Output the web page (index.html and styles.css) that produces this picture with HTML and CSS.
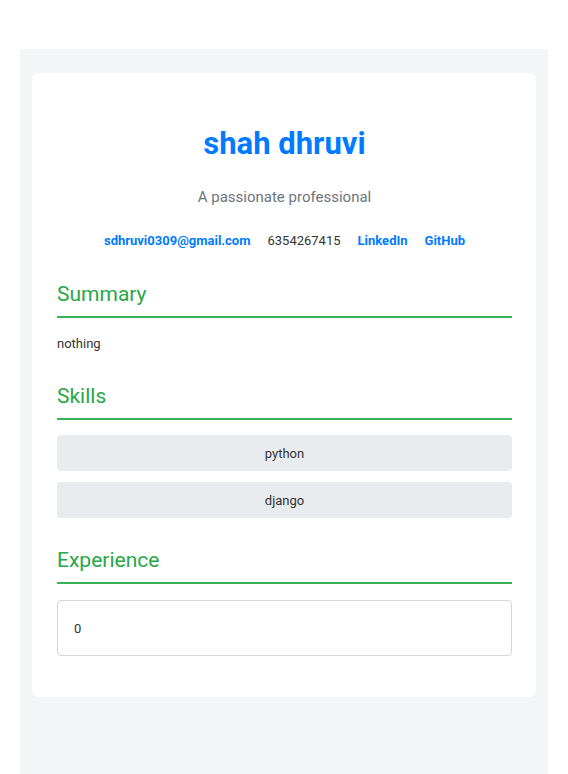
FILE: index.html
```html
<!DOCTYPE html>
<html>
<head>
<meta charset="utf-8">
<link rel="stylesheet" href="styles.css">
</head>
<body>
<div class="page">
  <div class="card">
    <header class="head">
      <h1 class="name">shah dhruvi</h1>
      <p class="tagline">A passionate professional</p>
      <div class="contact">
        <a class="link" href="#">sdhruvi0309@gmail.com</a>
        <span class="phone">6354267415</span>
        <a class="link" href="#">LinkedIn</a>
        <a class="link" href="#">GitHub</a>
      </div>
    </header>
    <section class="section">
      <h2 class="sec-title">Summary</h2>
      <p class="text">nothing</p>
    </section>
    <section class="section">
      <h2 class="sec-title">Skills</h2>
      <div class="skills">
        <div class="skill">python</div>
        <div class="skill">django</div>
      </div>
    </section>
    <section class="section">
      <h2 class="sec-title">Experience</h2>
      <div class="exp">0</div>
    </section>
  </div>
</div>
</body>
</html>
```
FILE: styles.css
```css
html, body {
  margin: 0;
  padding: 0;
  background: #fff;
}
body {
  font-family: Roboto, "Liberation Sans", sans-serif;
  color: #333;
  padding: 49px 20px 0;
}
.page {
  background: #f4f5f7;
  padding: 24px 12px 80px;
  min-height: 620px;
}
.card {
  background: #fff;
  border-radius: 6px;
  padding: 26px 24px 41px 25px;
}
.head {
  text-align: center;
  padding-bottom: 2px;
}
.name {
  margin: 27px 0 0;
  font-size: 31px;
  line-height: 36px;
  font-weight: 700;
  color: #007bff;
}
.tagline {
  margin: 24px 0 0;
  font-size: 15px;
  line-height: 22px;
  color: #6c757d;
}
.contact {
  margin-top: 24px;
  display: flex;
  justify-content: center;
  gap: 17px;
  font-size: 13px;
  line-height: 18px;
}
.link {
  color: #007bff;
  font-weight: 700;
  text-decoration: none;
}
.phone {
  color: #333;
}
.section {
  margin-top: 27px;
}
.sec-title {
  margin: 0;
  font-size: 21px;
  font-weight: 400;
  line-height: 30px;
  color: #28a745;
  padding-bottom: 7px;
  border-bottom: 2px solid #3cb054;
}
.text {
  margin: 16px 0 0;
  font-size: 13px;
  line-height: 20px;
  color: #333;
}
.skills {
  margin-top: 15px;
  display: flex;
  flex-direction: column;
  gap: 11px;
}
.skill {
  background: #e9ecef;
  border-radius: 4px;
  height: 36px;
  display: flex;
  align-items: center;
  justify-content: center;
  font-size: 13px;
  color: #333;
}
.exp {
  margin-top: 16px;
  border: 1px solid #d3d6da;
  border-radius: 4px;
  height: 56px;
  box-sizing: border-box;
  padding: 0 16px;
  display: flex;
  align-items: center;
  font-size: 13px;
  color: #333;
}
```
